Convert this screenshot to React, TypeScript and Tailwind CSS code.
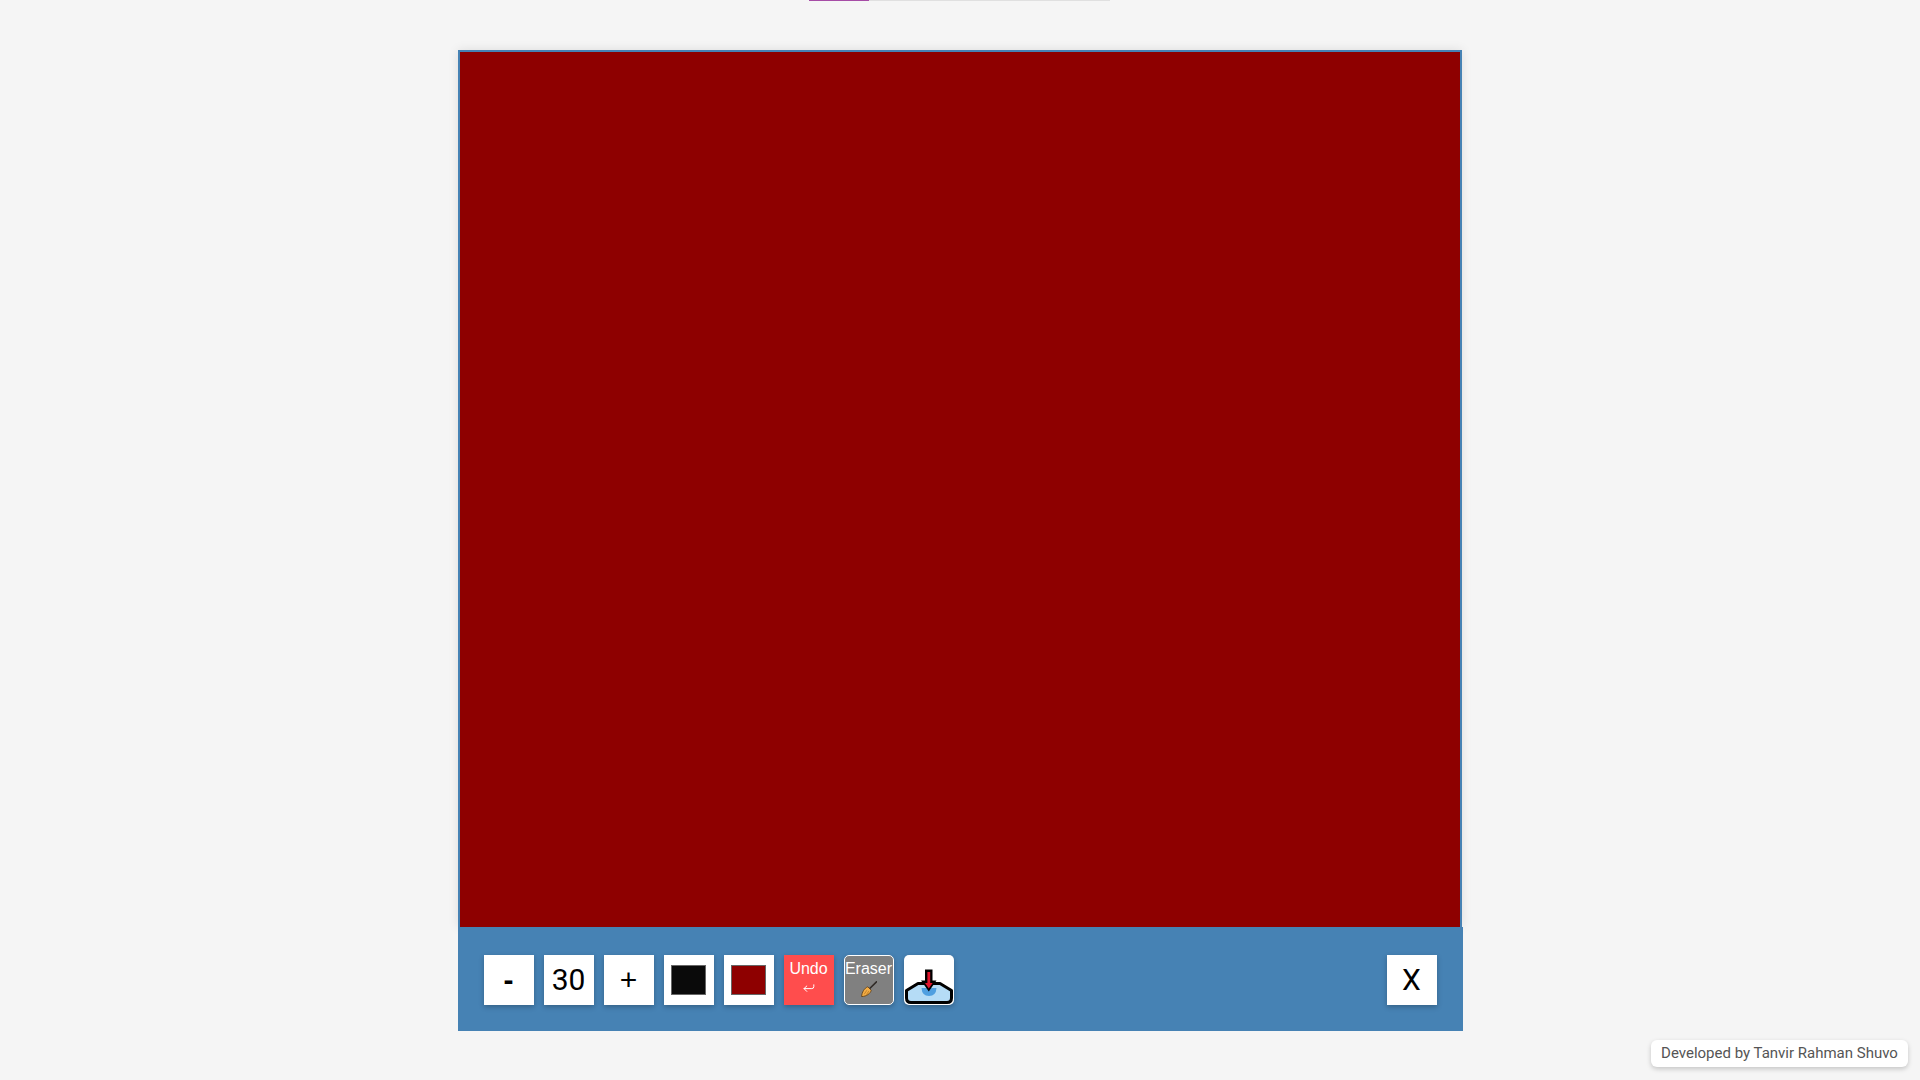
import React from 'react';

const arial = "font-['Liberation_Sans',Arial,sans-serif]";
const roboto = "font-['Roboto',sans-serif]";

const BroomIcon = () => (
  <svg width="16" height="16" viewBox="0 0 16 16" fill="none" xmlns="http://www.w3.org/2000/svg">
    <path d="M15.5 0.8 L8.2 8" stroke="#2f2a26" strokeWidth="1.6" strokeLinecap="round" />
    <path d="M6.8 5.8 L10.2 9.2 C9.6 12.4 5.6 15.4 0.6 15.6 C0.9 11.2 3.4 7 6.8 5.8 Z" fill="#f5ae45" stroke="#5b3a12" strokeWidth="0.8" strokeLinejoin="round" />
    <path d="M5.6 9.6 L3.4 13 M7.6 10.4 L5.6 13.4" stroke="#b0701c" strokeWidth="0.7" strokeLinecap="round" />
  </svg>
);

const ReturnArrow = () => (
  <svg width="12" height="9" viewBox="0 0 12 9" fill="none" xmlns="http://www.w3.org/2000/svg">
    <path d="M10.8 0.8 V2.6 Q10.8 4.6 8.8 4.6 H1 M3.8 2 L1 4.6 L3.8 7.4" stroke="#ffffff" strokeWidth="1" strokeLinecap="round" strokeLinejoin="round" />
  </svg>
);

// drawn in the button's own 50x50 box
const SaveIcon = () => (
  <svg width="50" height="50" viewBox="0 0 50 50" fill="none" xmlns="http://www.w3.org/2000/svg">
    <path d="M14 28.5 H36 L47.5 35.5 V43 Q47.5 47.5 43 47.5 H7 Q2.5 47.5 2.5 43 V35.5 Z" fill="#b5dcf6" stroke="#000" strokeWidth="3" strokeLinejoin="round" />
    <path d="M17.5 33 Q18 41 25 41 Q32 41 32.5 33 Z" fill="#4f9fe0" />
    <path d="M21 14.5 H28.5 V25.5 H32.5 L24.8 36.5 L17 25.5 H21 Z" fill="#000" />
    <path d="M23.4 17 H26.2 V28 H28.6 L24.8 33.6 L21 28 H23.4 Z" fill="#e0142c" />
  </svg>
);

const toolButton = 'w-[50px] h-[50px] bg-white flex items-center justify-center shadow-[0_2px_5px_rgba(0,0,0,0.25)] text-black';

export default function App() {
  return (
    <div className={`relative min-h-[1080px] bg-[#f5f5f5] ${arial}`}>
      <div className="flex justify-center">
        <div className="w-[301px] mr-px h-px bg-[#e0e0e0] flex">
          <div className="w-[60px] h-px bg-[#a64ca6]" />
        </div>
      </div>

      <div className="w-[1005px] mx-auto mt-[49px] flex flex-col">
        <div className="h-[877px] w-[1004px] bg-[#8e0000] border-2 border-b-0 border-[#4682b4] shadow-[0_0_10px_rgba(0,0,0,0.1)]" />
        <div className="relative h-[104px] pt-[2px] bg-[#4682b4] flex items-center justify-between px-[26px]">
          <div className="flex items-center gap-[10px]">
            <button className={`${toolButton} text-[30px] font-bold pb-[2px]`}>-</button>
            <div className={`${toolButton} text-[30px] pb-[2px] ${roboto}`}>30</div>
            <button className={`${toolButton} text-[30px] pb-[2px]`}>+</button>
            <button className={toolButton}>
              <span className="block w-[35px] h-[30px] bg-[#0a0a0a] border border-[#666666]" />
            </button>
            <button className={toolButton}>
              <span className="block w-[35px] h-[30px] bg-[#8e0000] border border-[#666666]" />
            </button>
            <button className="w-[50px] h-[50px] bg-[#ff4d4d] text-white flex flex-col items-center justify-start pt-[5px] text-[16px] leading-[18px] shadow-[0_2px_5px_rgba(0,0,0,0.25)]">
              <span>Undo</span>
              <span className="mt-[6px]"><ReturnArrow /></span>
            </button>
            <button className="w-[50px] h-[50px] bg-[#808080] text-white border border-white rounded-[5px] flex flex-col items-center justify-start text-[16px] leading-[18px] pt-[4px] shadow-[0_2px_5px_rgba(0,0,0,0.25)]">
              <span>Eraser</span>
              <span className="mt-[3px]"><BroomIcon /></span>
            </button>
            <button className="w-[50px] h-[50px] bg-white rounded-[5px] flex items-center justify-center shadow-[0_2px_5px_rgba(0,0,0,0.25)]">
              <SaveIcon />
            </button>
          </div>
          <button className={`${toolButton} text-[30px] pb-[2px] ${roboto}`}>X</button>
        </div>
      </div>

      <div className={`absolute right-[12px] top-[1040px] h-[27px] w-[257px] bg-white rounded-[6px] flex items-center justify-center text-[15px] text-[#555555] ${roboto} shadow-[0_2px_5px_rgba(0,0,0,0.2)]`}>
        Developed by Tanvir Rahman Shuvo
      </div>
    </div>
  );
}
